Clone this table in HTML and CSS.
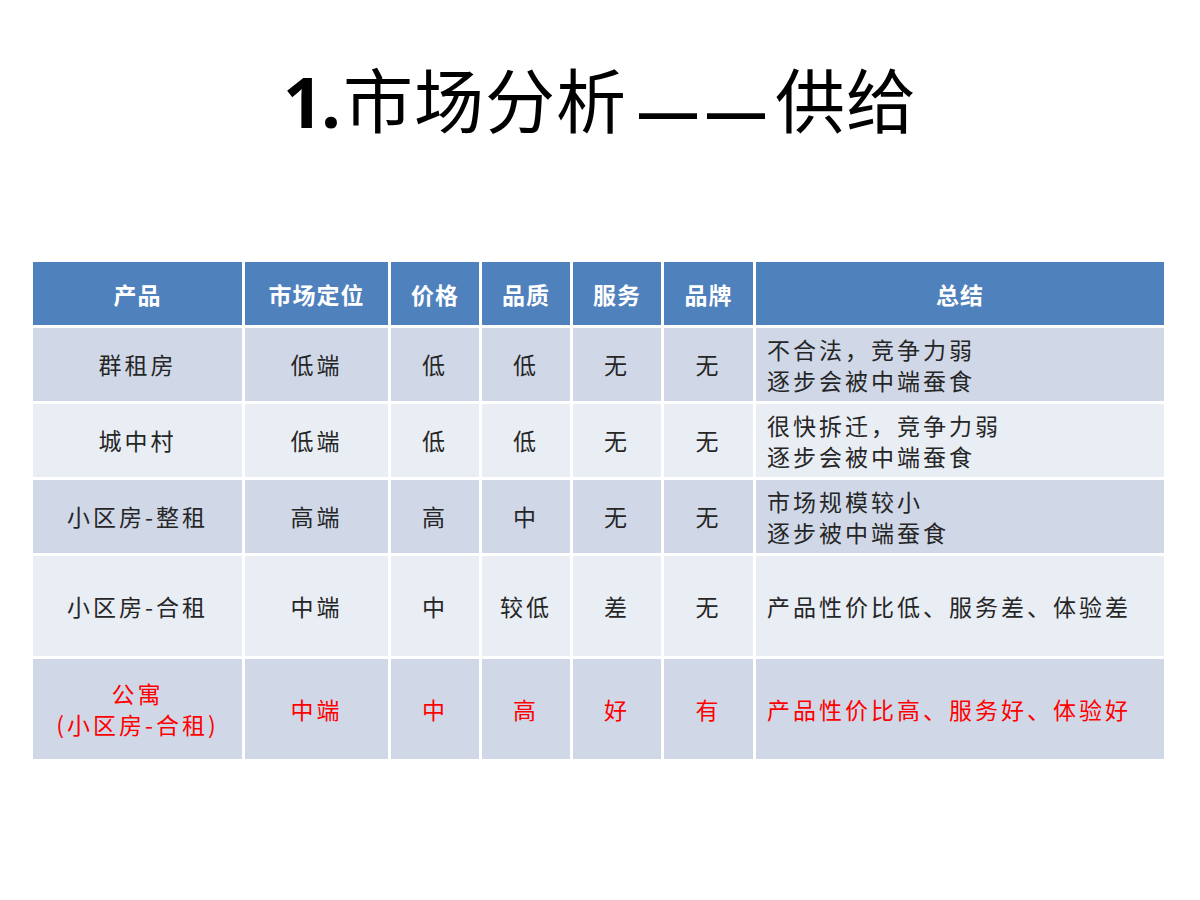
FILE: index.html
```html
<!DOCTYPE html>
<html lang="zh-CN">
<head>
<meta charset="utf-8">
<link rel="stylesheet" href="styles.css">
</head>
<body>
<div class="slide">
  <h1 class="title"><span class="num">1.</span>市场分析<span class="dash">——</span>供给</h1>
  <table class="grid">
    <colgroup>
      <col class="c1"><col class="c2"><col class="c3"><col class="c4"><col class="c5"><col class="c6"><col class="c7">
    </colgroup>
    <thead>
      <tr class="head">
        <th>产品</th><th>市场定位</th><th>价格</th><th>品质</th><th>服务</th><th>品牌</th><th>总结</th>
      </tr>
    </thead>
    <tbody>
      <tr class="odd r1">
        <td>群租房</td><td>低端</td><td>低</td><td>低</td><td>无</td><td>无</td>
        <td class="sum">不合法，竞争力弱<br>逐步会被中端蚕食</td>
      </tr>
      <tr class="even r1">
        <td>城中村</td><td>低端</td><td>低</td><td>低</td><td>无</td><td>无</td>
        <td class="sum">很快拆迁，竞争力弱<br>逐步会被中端蚕食</td>
      </tr>
      <tr class="odd r1">
        <td>小区房-整租</td><td>高端</td><td>高</td><td>中</td><td>无</td><td>无</td>
        <td class="sum">市场规模较小<br>逐步被中端蚕食</td>
      </tr>
      <tr class="even r2">
        <td>小区房-合租</td><td>中端</td><td>中</td><td>较低</td><td>差</td><td>无</td>
        <td class="sum">产品性价比低、服务差、体验差</td>
      </tr>
      <tr class="odd r2 red">
        <td>公寓<br>(小区房-合租)</td><td>中端</td><td>中</td><td>高</td><td>好</td><td>有</td>
        <td class="sum">产品性价比高、服务好、体验好</td>
      </tr>
    </tbody>
  </table>
</div>
</body>
</html>
```
FILE: styles.css
```css
html, body {
  margin: 0;
  padding: 0;
  background: #ffffff;
}
.slide {
  width: 1200px;
  height: 900px;
  box-sizing: border-box;
  padding-top: 52px;
  font-family: "Noto Sans CJK SC", "Noto Sans", sans-serif;
}
.title {
  margin: 0;
  height: 92px;
  text-align: center;
  font-size: 70px;
  font-weight: 400;
  line-height: 92px;
  color: #000;
  letter-spacing: 1px;
}
.title .num {
  font-family: "Open Sans", "Liberation Sans", sans-serif;
  font-weight: 700;
  letter-spacing: -2px;
  margin-right: 4px;
}
.title .dash {
  font-family: "Liberation Sans", sans-serif;
  font-weight: 700;
  font-size: 58px;
  line-height: 0;
  letter-spacing: 10px;
  margin-left: 12px;
  margin-right: 0;
  position: relative;
  top: 4px;
}
.grid {
  margin: 115px 0 0 30px;
  border-collapse: collapse;
  table-layout: fixed;
  width: 1134px;
}
.c1 { width: 212px; }
.c2 { width: 146px; }
.c3 { width: 91px; }
.c4 { width: 91px; }
.c5 { width: 91px; }
.c6 { width: 92px; }
.c7 { width: 411px; }
.grid th, .grid td {
  border: 3px solid #ffffff;
  padding: 0;
  text-align: center;
  vertical-align: middle;
}
.grid th {
  background: #4f81bd;
  color: #ffffff;
  font-size: 23px;
  font-weight: 700;
  letter-spacing: 1px;
  height: 63px;
}
.grid td {
  font-size: 23px;
  line-height: 31px;
  color: #262626;
  letter-spacing: 3px;
}
.grid td.sum {
  text-align: left;
  padding-left: 11px;
}
.odd td { background: #d0d8e8; }
.even td { background: #e9edf4; }
.r1 td { height: 73px; }
.r2 td { height: 100px; }
.red td { color: #ff0000; }
```
